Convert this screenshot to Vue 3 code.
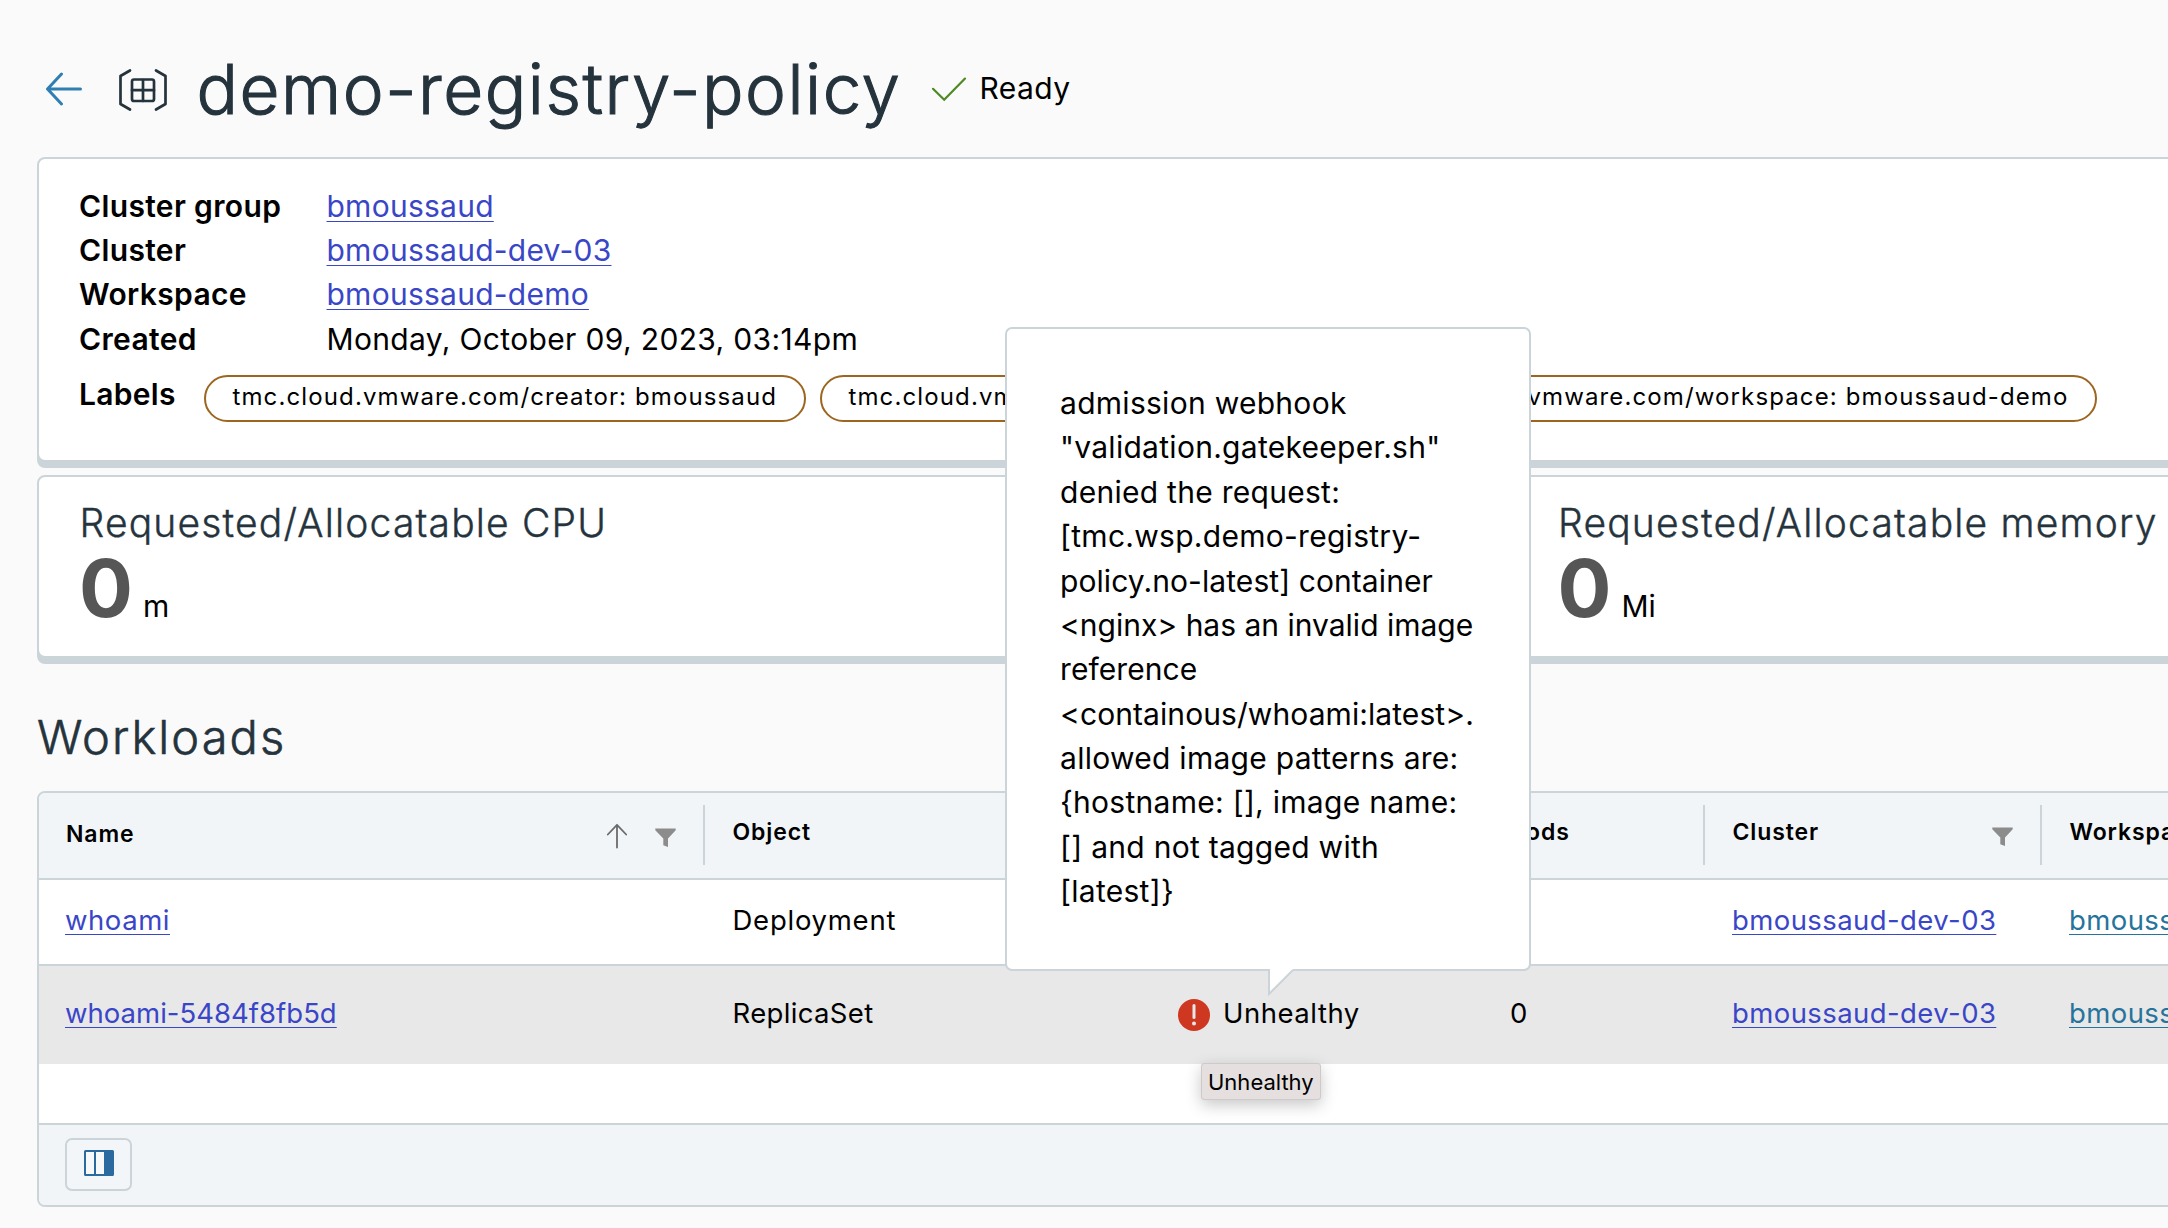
<script setup>
const details = [
  { label: 'Cluster group', value: 'bmoussaud', link: true },
  { label: 'Cluster', value: 'bmoussaud-dev-03', link: true },
  { label: 'Workspace', value: 'bmoussaud-demo', link: true },
  { label: 'Created', value: 'Monday, October 09, 2023, 03:14pm', link: false },
]

const labels = [
  { text: 'tmc.cloud.vmware.com/creator: bmoussaud', size: 'pill-creator' },
  { text: 'tmc.cloud.vmware.com/managed: true', size: 'pill-managed' },
  { text: 'tmc.cloud.vmware.com/workspace: bmoussaud-demo', size: 'pill-workspace' },
]

const metrics = [
  { title: 'Requested/Allocatable CPU', value: 0, unit: 'm' },
  { title: 'Requested/Allocatable memory', value: 0, unit: 'Mi' },
]

const workloads = [
  { name: 'whoami', object: 'Deployment', status: '', pods: '', cluster: 'bmoussaud-dev-03', workspace: 'bmoussaud-demo' },
  { name: 'whoami-5484f8fb5d', object: 'ReplicaSet', status: 'Unhealthy', pods: '0', cluster: 'bmoussaud-dev-03', workspace: 'bmoussaud-demo' },
]

const message = [
  'admission webhook',
  '"validation.gatekeeper.sh"',
  'denied the request:',
  '[tmc.wsp.demo-registry-',
  'policy.no-latest] container',
  '<nginx> has an invalid image',
  'reference',
  '<containous/whoami:latest>.',
  'allowed image patterns are:',
  '{hostname: [], image name:',
  '[] and not tagged with',
  '[latest]}',
]
</script>

<template>
  <main class="page">
    <header class="page-header">
      <svg class="back" width="38" height="34" viewBox="0 0 38 34" fill="none" stroke="#2f7fb3" stroke-width="3" stroke-linecap="round" stroke-linejoin="round">
        <path d="M35.500 17H2.500M16.500 2L2.500 17L16.500 32" />
      </svg>
      <svg class="namespace" width="50" height="44" viewBox="0 0 50 44" fill="none" stroke="#25333d" stroke-width="2.700" stroke-linecap="round" stroke-linejoin="round">
        <path d="M12 2.500L2.500 8V36L12 41.500M38 2.500L47.500 8V36L38 41.500" />
        <rect x="14" y="11.500" width="22" height="21.500" rx="2" />
        <path d="M25 12V33M14 22.200H36" />
      </svg>
      <h1>demo-registry-policy</h1>
      <svg class="check" width="36" height="26" viewBox="0 0 36 26" fill="none" stroke="#4d8a22" stroke-width="2.200" stroke-linecap="round">
        <path d="M2 12.800L13.200 23.700L34 2.600" />
      </svg>
      <span class="ready">Ready</span>
    </header>

    <section class="card summary">
      <dl>
        <div v-for="d in details" :key="d.label" class="detail">
          <dt>{{ d.label }}</dt>
          <dd><a v-if="d.link" href="#">{{ d.value }}</a><span v-else class="date">{{ d.value }}</span></dd>
        </div>
      </dl>
      <div class="labels">
        <span class="labels-title">Labels</span>
        <span v-for="l in labels" :key="l.text" class="pill" :class="l.size">{{ l.text }}</span>
      </div>
    </section>

    <section class="card metrics">
      <div v-for="m in metrics" :key="m.title" class="metric">
        <h3>{{ m.title }}</h3>
        <p><strong>{{ m.value }}</strong><span>{{ m.unit }}</span></p>
      </div>
    </section>

    <h2>Workloads</h2>

    <section class="table">
      <div class="row head">
        <div class="cell first">
          <span>Name</span>
          <svg class="sort" width="22" height="26" viewBox="0 0 22 26" fill="none" stroke="#6b6b6b" stroke-width="1.800" stroke-linecap="round" stroke-linejoin="round">
            <path d="M11 24.500V1.800M1.800 11.500L11 1.800L20.200 11.500" />
          </svg>
          <svg class="filter" width="21" height="20" viewBox="0 0 21 20"><path d="M.3 .5H20.700V2.200L13 10.500V19L8.300 17.200V10.500L.3 2.200Z" fill="#8c8c8c" /></svg>
        </div>
        <div class="cell"><span>Object</span></div>
        <div class="cell"><span>Status</span></div>
        <div class="cell pods"><span>Pods</span></div>
        <div class="cell">
          <span>Cluster</span>
          <svg class="filter" width="21" height="20" viewBox="0 0 21 20"><path d="M.3 .5H20.700V2.200L13 10.500V19L8.300 17.200V10.500L.3 2.200Z" fill="#8c8c8c" /></svg>
        </div>
        <div class="cell"><span>Workspace</span></div>
      </div>
      <div v-for="w in workloads" :key="w.name" class="row body" :class="{ active: w.status }">
        <div class="cell first"><a class="name" href="#">{{ w.name }}</a></div>
        <div class="cell object">{{ w.object }}</div>
        <div class="cell status">
          <svg v-if="w.status" width="32" height="32" viewBox="0 0 32 32">
            <circle cx="16" cy="16" r="16" fill="#cf3820" />
            <path d="M16 6.500V18.500" stroke="#e8e8e8" stroke-width="3" stroke-linecap="round" />
            <circle cx="16" cy="24.500" r="2" fill="#e8e8e8" />
          </svg>
          <span>{{ w.status }}</span>
        </div>
        <div class="cell pods">{{ w.pods }}</div>
        <div class="cell"><a href="#">{{ w.cluster }}</a></div>
        <div class="cell"><a class="teal" href="#">{{ w.workspace }}</a></div>
      </div>
      <div class="filler"></div>
      <footer>
        <button type="button" aria-label="Manage columns">
          <svg width="30" height="26" viewBox="0 0 30 26">
            <rect x="1" y="1" width="28" height="24" rx=".5" fill="#f7f8fa" stroke="#2b6a9e" stroke-width="2" />
            <path d="M11 1V25" stroke="#2b6a9e" stroke-width="2" />
            <path d="M20 1H29V25H20Z" fill="#2b6a9e" />
          </svg>
        </button>
      </footer>
    </section>

    <aside class="signpost">
      <div v-for="(line, i) in message" :key="i">{{ line }}</div>
      <svg class="pointer" width="27" height="30" viewBox="0 0 27 30">
        <path d="M1 0V26L25 2V0Z" fill="#fff" />
        <path d="M1 1V26L25 2" fill="none" stroke="#cbd4d8" stroke-width="2" />
      </svg>
    </aside>

    <div class="hint">Unhealthy</div>
  </main>
</template>

<style>
body {
  margin: 0;
  background: #fafafa;
}
</style>

<style scoped>
.page {
  position: relative;
  box-sizing: border-box;
  width: 2168px;
  height: 1228px;
  overflow: hidden;
  padding: 20px 0 0 37px;
  background: #fafafa;
  color: #000;
  font-family: Inter, "Liberation Sans", sans-serif;
  font-size: 30px;
  line-height: 44.4px;
  white-space: nowrap;
}
.page * {
  box-sizing: border-box;
}
h1, h2, h3, p, dl, dd {
  margin: 0;
  font-weight: 300;
}
a {
  color: #3a46c8;
  text-decoration: underline;
  text-decoration-thickness: 1px;
  text-underline-offset: 4px;
  text-decoration-skip-ink: none;
}
.page-header {
  display: flex;
  align-items: center;
  height: 137px;
}
.back { margin-left: 8px; }
.namespace { margin: 2px 0 0 35px; }
h1 {
  width: 731px;
  margin: 2px 0 0 28.500px;
  color: #25333d;
  font-size: 69px;
  letter-spacing: 1.520px;
  -webkit-text-stroke: 1.100px #25333d;
}
.check { margin-left: 3px; }
.ready {
  margin-left: 13px;
  letter-spacing: .450px;
}
.card {
  width: 2300px;
  border: 2px solid #cbd4d8;
  border-radius: 8px;
  background: #fff;
  box-shadow: 0 6px 0 #cbd4d8;
}
.summary {
  height: 305px;
  padding: 24.600px 0 0 40px;
}
.detail {
  display: flex;
}
dt {
  width: 247.500px;
  font-weight: 600;
  letter-spacing: .350px;
}
dd { font-weight: 400; letter-spacing: .250px; }
.date { letter-spacing: .350px; }
.labels {
  display: flex;
  height: 47px;
  margin-top: 13.600px;
}
.labels-title {
  width: 124.500px;
  line-height: 38px;
  font-weight: 600;
  letter-spacing: .300px;
}
.pill {
  flex: none;
  height: 47px;
  margin-right: 14px;
  padding-left: 27px;
  border: 2px solid #9c6520;
  border-radius: 24px;
  font-size: 24px;
  line-height: 40px;
  letter-spacing: 1.120px;
}
.pill-creator { width: 602px; }
.pill-managed { width: 561px; }
.pill-workspace { width: 702px; padding: 0 26px 0 0; text-align: right; }
.metrics {
  display: flex;
  height: 183px;
  margin-top: 13px;
  padding: 22px 0 0 40px;
}
.metric { flex: none; width: 1478.500px; }
h3 {
  padding-left: .500px;
  color: #25333d;
  font-size: 39px;
  line-height: 48px;
  letter-spacing: 1.170px;
  -webkit-text-stroke: .400px #25333d;
}
.metric p {
  display: flex;
  align-items: baseline;
  line-height: 81px;
}
.metric strong {
  color: #565656;
  font-size: 80px;
  font-weight: 700;
}
.metric span { margin-left: 10px; font-weight: 400; }
h2 {
  margin: 51px 0 26px;
  color: #25333d;
  font-size: 47px;
  line-height: 56px;
  letter-spacing: 2.050px;
  -webkit-text-stroke: .600px #25333d;
}
.table {
  width: 2300px;
  height: 416px;
  border: 2px solid #cbd4d8;
  border-radius: 8px;
  background: #fff;
  overflow: hidden;
}
.row {
  display: grid;
  grid-template-columns: 664px 446px 332px 222px 337px 1fr;
  align-items: center;
}
.cell {
  display: flex;
  align-items: center;
  padding-left: 28px;
}
.cell.first { padding-left: 27px; }
.head {
  height: 87px;
  background: #f1f5f8;
  border-bottom: 2px solid #cbd4d8;
  font-size: 23px;
  font-weight: 600;
  letter-spacing: .900px;
}
.head .cell {
  height: 60px;
  margin-top: -1px;
  padding-bottom: 5px;
  border-left: 2px solid #cbd4d8;
}
.head .cell + .cell { padding-left: 27.500px; }
.head .cell.first { border-left: 0; padding-bottom: 2px; }
.head .sort { margin: 4px 27px 0 auto; }
.head .filter { margin: 9px 27px 0 auto; }
.head .first .filter { margin-left: 0; margin-top: 7px; }
.body {
  height: 86px;
  border-bottom: 2px solid #cbd4d8;
  font-size: 27.500px;
  letter-spacing: .420px;
}
.body .cell { padding: 0 0 4.600px 29px; }
.body .first { padding-left: 26px; }
.body .object { letter-spacing: .750px; padding-left: 29.500px; }
.body.active .object { letter-spacing: .350px; }
.body.active {
  height: 98px;
  border: 0;
  background: #e8e8e8;
}
.name { letter-spacing: .550px; }
.active .name { letter-spacing: .020px; }
.status span { margin-left: 13px; letter-spacing: .520px; }
.status svg { margin-top: 4px; }
.teal { color: #26739b; }
.filler { height: 59px; }
footer {
  height: 82px;
  padding: 13px 0 0 26px;
  border-top: 2px solid #cbd4d8;
  background: #f1f5f8;
}
button {
  display: flex;
  align-items: center;
  justify-content: center;
  width: 67px;
  height: 53px;
  padding: 0 0 4px;
  border: 2px solid #cbd4d8;
  border-radius: 7px;
  background: #f3f6f9;
}
.signpost {
  position: absolute;
  left: 1005px;
  top: 327px;
  width: 526px;
  height: 644px;
  padding: 52px 0 0 53px;
  border: 2px solid #cbd4d8;
  border-radius: 7px;
  background: #fff;
  line-height: 44.380px;
  letter-spacing: .080px;
}
.signpost div:nth-child(-n+4),
.signpost div:nth-child(n+9) { letter-spacing: .280px; }
.signpost div:nth-child(6) { letter-spacing: 0; }
.pointer {
  position: absolute;
  left: 261px;
  top: 639px;
}
.hint {
  position: absolute;
  left: 1201px;
  top: 1063px;
  width: 120px;
  height: 37px;
  padding-left: 6px;
  border: 1px solid #cfcaca;
  border-radius: 3px;
  background: #e5dfdf;
  box-shadow: 0 5px 16px rgba(0, 0, 0, .22);
  font-size: 22px;
  line-height: 36px;
}
</style>
